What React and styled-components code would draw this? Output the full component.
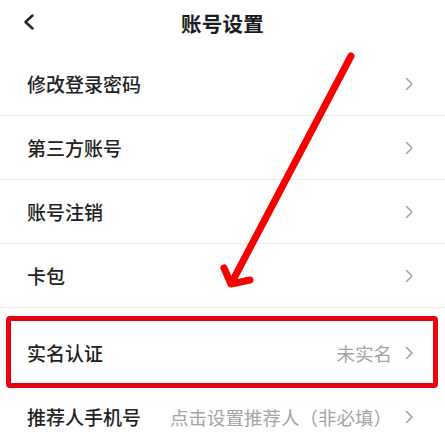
import React from "react";
import styled, { createGlobalStyle } from "styled-components";

const GlobalStyle = createGlobalStyle`
  html, body {
    margin: 0;
    padding: 0;
    background: #fff;
  }
  body {
    font-family: "Noto Sans CJK SC", "Noto Sans", sans-serif;
    -webkit-font-smoothing: antialiased;
  }
`;

const rows = [
  { label: "修改登录密码" },
  { label: "第三方账号" },
  { label: "账号注销" },
  { label: "卡包", last: true },
  { label: "实名认证", value: "未实名", highlighted: true, gapBefore: true },
  { label: "推荐人手机号", value: "点击设置推荐人（非必填）" },
];

const Chevron = ({ color = "#a3a3a3" }) => (
  <svg width="9" height="14" viewBox="0 0 9 14">
    <polyline points="1.5,1.5 7,7 1.5,12.5" fill="none" stroke={color} strokeWidth="1.6" strokeLinecap="round" strokeLinejoin="round" />
  </svg>
);

const App = () => {
  return (
    <Page>
      <GlobalStyle />
      <Header>
        <BackButton>
          <svg width="12" height="16" viewBox="0 0 12 16">
            <polyline points="9.5,1.5 2.5,8 9.5,14.5" fill="none" stroke="#222" strokeWidth="2.4" strokeLinecap="round" strokeLinejoin="round" />
          </svg>
        </BackButton>
        <Title>账号设置</Title>
      </Header>
      <List>
        {rows.map(row => (
          <Row key={row.label} $gapBefore={row.gapBefore}>
            <Label>{row.label}</Label>
            <Right>
              {row.value && <Value>{row.value}</Value>}
              <Chevron />
            </Right>
            {row.highlighted && <Outline />}
          </Row>
        ))}
      </List>
      <Arrow width="445" height="432" viewBox="0 0 445 432">
        <g fill="none" stroke="#f60000" strokeWidth="7" strokeLinecap="round" strokeLinejoin="round">
          <path d="M351 56 L232 282" />
          <path d="M224 268 L231 284 L250 280" />
        </g>
      </Arrow>
    </Page>
  );
};

export default App;

const Page = styled.div`
  position: relative;
  width: 445px;
  height: 432px;
  overflow: hidden;
  background: #fff;
`;

const Header = styled.div`
  position: relative;
  height: 46px;
  display: flex;
  align-items: center;
  justify-content: center;
`;

const BackButton = styled.div`
  position: absolute;
  left: 23px;
  top: 14px;
  display: flex;
`;

const Title = styled.div`
  font-size: 20.5px;
  font-weight: 700;
  color: #1c1c1c;
  letter-spacing: 0.3px;
`;

const List = styled.div`
  padding-top: 6px;
`;

const Row = styled.div`
  position: relative;
  height: 63px;
  margin-top: ${props => (props.$gapBefore ? "13px" : "0")};
  padding: 0 31px 0 27px;
  display: flex;
  align-items: center;
  justify-content: space-between;
  border-bottom: 1px solid ${props => (props.$gapBefore ? "transparent" : "#ececec")};
`;

const Label = styled.div`
  font-size: 19px;
  font-weight: 500;
  color: #222;
`;

const Right = styled.div`
  display: flex;
  align-items: center;
  gap: 13px;
`;

const Value = styled.div`
  font-size: 18.5px;
  color: #a3a3a3;
`;

const Outline = styled.div`
  position: absolute;
  left: 6px;
  right: 7px;
  top: -5px;
  bottom: -4px;
  border: 5px solid #ec0010;
  border-radius: 4px;
  pointer-events: none;
`;

const Arrow = styled.svg`
  position: absolute;
  left: 0;
  top: 0;
  pointer-events: none;
`;
